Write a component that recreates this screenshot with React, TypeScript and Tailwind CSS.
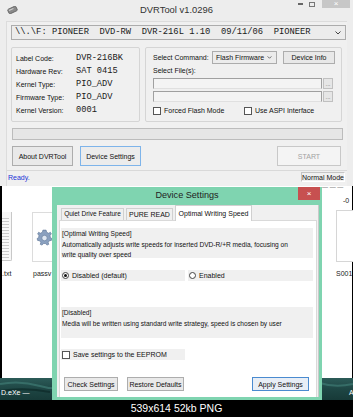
import React from "react";

const sans = { fontFamily: '"Liberation Sans", Arial, sans-serif' };
const mono = { fontFamily: '"Liberation Mono", "Courier New", monospace' };

function Btn({ children, className = "" }: { children: React.ReactNode; className?: string }) {
  return (
    <div
      className={
        "flex items-center justify-center border text-[7px] leading-none text-[#111] whitespace-nowrap " + className
      }
    >
      {children}
    </div>
  );
}

function Check({ label }: { label: string }) {
  return (
    <div className="flex items-center gap-[3px]">
      <div className="w-[8px] h-[8px] bg-white border border-[#555]" />
      <span className="text-[7px] leading-none text-[#111] whitespace-nowrap">{label}</span>
    </div>
  );
}

function Radio({ label, on }: { label: string; on?: boolean }) {
  return (
    <div className="flex items-center gap-[3px]">
      <div className="w-[7px] h-[7px] rounded-full bg-white border border-[#444] flex items-center justify-center">
        {on && <div className="w-[3px] h-[3px] rounded-full bg-[#111]" />}
      </div>
      <span className="text-[7px] leading-none text-[#111] whitespace-nowrap">{label}</span>
    </div>
  );
}

function MainWindow() {
  const info: [string, string][] = [
    ["Label Code:", "DVR-216BK"],
    ["Hardware Rev:", "SAT 0415"],
    ["Kernel Type:", "PIO_ADV"],
    ["Firmware Type:", "PIO_ADV"],
    ["Kernel Version:", "0001"],
  ];
  return (
    <div className="absolute left-0 top-0 w-[353px] h-[186px] bg-[#ededed] flex flex-col" style={sans}>
      {/* title bar */}
      <div className="relative h-[21px] flex items-center justify-center">
        <svg className="absolute left-[7px] top-[6px]" width="11" height="8" viewBox="0 0 11 8">
          <g transform="rotate(-25 5.5 4)">
            <rect x="1" y="1.5" width="9" height="5" rx="1.2" fill="#8a8a8a" stroke="#555" strokeWidth="0.7" />
            <rect x="2" y="2.5" width="5" height="1" fill="#d0d0d0" />
          </g>
        </svg>
        <span className="text-[9.4px] text-[#333] leading-none mb-[1px]">DVRTool v1.0296</span>
        <div className="absolute right-[3px] top-0 flex items-start">
          <div className="w-[10px] h-[8px] flex items-center justify-center">
            <div className="w-[5px] h-[1.5px] bg-[#666]" />
          </div>
          <div className="w-[10px] h-[8px] flex items-center justify-center ml-[2px]">
            <div className="w-[6px] h-[5px] border border-[#777]" />
          </div>
          <div className="ml-[5px] w-[28px] h-[8px] bg-[#c7c7c7] flex items-center justify-center text-white text-[8px] leading-none">
            ×
          </div>
        </div>
      </div>
      {/* client */}
      <div className="ml-[6px] w-[341px] flex-1 bg-[#f0f0f0] border-l border-t border-[#dcdcdc] flex flex-col">
        {/* drive combo */}
        <div className="mt-[3px] ml-[4px] w-[335px] h-[15px] bg-[#ececec] border border-[#acacac] flex items-center">
          <span className="ml-[3px] text-[8.8px] leading-none text-[#1a1a1a] whitespace-pre" style={mono}>
            {"\\\\.\\F: PIONEER  DVD-RW  DVR-216L 1.10  09/11/06  PIONEER"}
          </span>
          <svg className="ml-auto mr-[4px]" width="6" height="4" viewBox="0 0 6 4">
            <path d="M0.5 0.5 L3 3 L5.5 0.5" stroke="#444" strokeWidth="1" fill="none" />
          </svg>
        </div>
        {/* groups */}
        <div className="mt-[7px] ml-[4px] flex gap-[5px] h-[75px]">
          <div className="w-[129px] border border-[#d5d5d5] rounded-[2px] pt-[4px] pl-[4px] flex flex-col">
            {info.map(([k, v]) => (
              <div key={k} className="h-[13px] flex items-center">
                <span className="w-[60px] text-[7px] leading-none text-[#111]">{k}</span>
                <span className="text-[8.7px] leading-none text-[#1a1a1a]" style={mono}>
                  {v}
                </span>
              </div>
            ))}
          </div>
          <div className="w-[197px] border border-[#d5d5d5] rounded-[2px] pt-[3px] pl-[7px] flex flex-col">
            <div className="h-[13px] flex items-center">
              <span className="w-[59px] text-[7px] leading-none text-[#111]">Select Command:</span>
              <div className="w-[65px] h-[13px] bg-[#ececec] border border-[#acacac] flex items-center">
                <span className="ml-[3px] text-[7px] leading-none text-[#111]">Flash Firmware</span>
                <svg className="ml-auto mr-[4px]" width="5" height="3" viewBox="0 0 6 4">
                  <path d="M0.5 0.5 L3 3 L5.5 0.5" stroke="#444" strokeWidth="1" fill="none" />
                </svg>
              </div>
              <Btn className="ml-[6px] w-[52px] h-[13px] bg-[#e8e8e8] border-[#adadad]">Device Info</Btn>
            </div>
            <div className="h-[13px] flex items-center">
              <span className="text-[7px] leading-none text-[#111]">Select File(s):</span>
            </div>
            <div className="mt-[1px] flex items-center gap-[1px]">
              <div className="w-[169px] h-[11px] bg-[#f4f4f4] border border-[#a0a0a0] border-b-[#e0e0e0]" />
              <div className="w-[10px] h-[11px] bg-[#e6e6e6] border border-[#c0c0c0] text-[6px] leading-none text-[#666] flex items-end justify-center pb-[1px]">
                ...
              </div>
            </div>
            <div className="mt-[2px] flex items-center gap-[1px]">
              <div className="w-[169px] h-[11px] bg-[#f4f4f4] border border-[#a0a0a0] border-b-[#e0e0e0]" />
              <div className="w-[10px] h-[11px] bg-[#e6e6e6] border border-[#c0c0c0] text-[6px] leading-none text-[#666] flex items-end justify-center pb-[1px]">
                ...
              </div>
            </div>
            <div className="mt-[3px] h-[11px] flex items-center">
              <div className="w-[91px]">
                <Check label="Forced Flash Mode" />
              </div>
              <Check label="Use ASPI Interface" />
            </div>
          </div>
        </div>
        {/* progress */}
        <div className="mt-[6px] ml-[5px] w-[331px] h-[12px] bg-[#e6e6e6] border border-[#bcbcbc]" />
        {/* buttons */}
        <div className="mt-[6px] flex h-[20px]">
          <Btn className="ml-[5px] w-[61px] h-[20px] bg-[#e9e9e9] border-[#adadad]">About DVRTool</Btn>
          <Btn className="ml-[7px] w-[61px] h-[20px] bg-[#ececec] border-[#7eb4ea]">Device Settings</Btn>
          <Btn className="ml-auto mr-[6px] w-[64px] h-[20px] bg-[#f4f4f4] border-[#c8c8c8] !text-[#a2a2a2]">
            START
          </Btn>
        </div>
        {/* status bar */}
        <div className="mt-[4px] h-[13px] border-t border-[#d9d9d9] flex items-center">
          <span className="ml-[1px] text-[7px] leading-none text-[#2233d6]">Ready.</span>
          <div className="ml-auto mr-[2px] w-[44px] h-[10px] border border-[#c5c5c5] border-r-white border-b-white flex items-center justify-center">
            <span className="text-[7px] leading-none text-[#111] whitespace-nowrap">Normal Mode</span>
          </div>
        </div>
      </div>
    </div>
  );
}

function Dialog() {
  return (
    <div className="absolute left-[52px] top-[187px] w-[270px] h-[213px] bg-[#7fd4b0] flex flex-col" style={sans}>
      <div className="relative h-[18px] flex items-center justify-center">
        <span className="text-[9.1px] leading-none text-[#222]">Device Settings</span>
        <div className="absolute right-[2px] top-0 w-[22px] h-[13px] bg-[#c75050] flex items-center justify-center text-white text-[8px] leading-none">
          ×
        </div>
      </div>
      <div className="ml-[5px] w-[262px] h-[192px] bg-[#f0f0f0] border-r border-[#c9c9c9] flex flex-col">
        {/* tab strip */}
        <div className="h-[15px] flex items-end pl-[4px]">
          <div className="w-[63px] h-[12px] bg-[#f0f0f0] border border-b-0 border-[#d0d0d0] flex items-center justify-center text-[6.5px] leading-none text-[#111] whitespace-nowrap">
            Quiet Drive Feature
          </div>
          <div className="ml-[2px] w-[47px] h-[12px] bg-[#f0f0f0] border border-b-0 border-[#d0d0d0] flex items-center justify-center text-[7px] leading-none text-[#111] whitespace-nowrap">
            PURE READ
          </div>
          <div className="ml-[2px] w-[77px] h-[16px] -mb-[1px] relative z-10 bg-white border border-b-0 border-[#d0d0d0] flex items-center justify-center text-[7px] leading-none text-[#111] whitespace-nowrap">
            Optimal Writing Speed
          </div>
        </div>
        {/* panel */}
        <div className="ml-[2px] w-[258px] flex-1 bg-white border border-[#d9d9d9] border-b-0 flex flex-col pl-[1px]">
          <div className="mt-[7px] w-[252px] h-[30px] bg-[#f0f0f0] pl-[1px] pt-[1px] text-[6.6px] leading-[10.5px] text-[#111] whitespace-nowrap">
            <div>[Optimal Writing Speed]</div>
            <div>Automatically adjusts write speeds for inserted DVD-R/+R media, focusing on</div>
            <div>write quality over speed</div>
          </div>
          <div className="mt-[12px] flex gap-[3px] h-[11px]">
            <div className="w-[124px] h-[11px] bg-[#f0f0f0] pl-[1px] flex items-center">
              <Radio label="Disabled (default)" on />
            </div>
            <div className="w-[125px] h-[11px] bg-[#f0f0f0] pl-[1px] flex items-center">
              <Radio label="Enabled" />
            </div>
          </div>
          <div className="mt-[26px] w-[252px] h-[31px] bg-[#f0f0f0] pl-[1px] text-[6.6px] leading-[11px] text-[#111] whitespace-nowrap">
            <div>[Disabled]</div>
            <div>Media will be written using standard write strategy, speed is chosen by user</div>
          </div>
          <div className="mt-[11px] w-[124px] h-[11px] bg-[#f0f0f0] pl-[1px] flex items-center">
            <Check label="Save settings to the EEPROM" />
          </div>
          <div className="mt-[17px] flex h-[14px]">
            <Btn className="ml-[3px] w-[54px] h-[14px] bg-[#e9e9e9] border-[#adadad]">Check Settings</Btn>
            <Btn className="ml-[9px] w-[57px] h-[14px] bg-[#e9e9e9] border-[#adadad]">Restore Defaults</Btn>
            <Btn className="ml-auto mr-[7px] w-[57px] h-[14px] bg-[#e8eef6] border-[#4a8bd0]">Apply Settings</Btn>
          </div>
        </div>
      </div>
    </div>
  );
}

function Desktop() {
  return (
    <div className="relative w-[353px] h-[400px] bg-white overflow-hidden" style={sans}>
      {/* side strips */}
      <div className="absolute left-0 top-[186px] w-[2px] h-[192px] bg-black" />
      <div className="absolute right-0 top-[186px] w-[1px] h-[192px] bg-black" />
      {/* bottom teal wallpaper strip */}
      <div className="absolute left-0 top-[378px] w-[353px] h-[22px] bg-gradient-to-b from-[#2c5b58] via-[#1e4644] to-[#173a38]">
        <svg className="absolute inset-0" width="353" height="22" viewBox="0 0 353 22">
          <path d="M0 6 Q20 2 40 8 T80 6" stroke="#3f7a74" strokeWidth="2" fill="none" opacity="0.7" />
          <path d="M0 13 Q25 9 50 14" stroke="#0f2c2a" strokeWidth="2" fill="none" opacity="0.8" />
          <path d="M320 5 Q335 10 353 6" stroke="#3f7a74" strokeWidth="2" fill="none" opacity="0.7" />
        </svg>
        <span className="absolute left-[1px] top-[11px] text-[7px] leading-none text-white whitespace-nowrap">D.eXe —</span>
        <span className="absolute left-[349px] top-[11px] text-[7px] leading-none text-white">A</span>
      </div>
      {/* txt file icon */}
      <div className="absolute left-[2px] top-[212px] w-[10px] h-[49px] bg-[#f7f7f7] border-r border-b border-[#c8c8c8] rounded-br-[2px] flex flex-col gap-[2px] pt-[6px] pr-[2px]">
        {Array.from({ length: 14 }).map((_, i) => (
          <div key={i} className="h-[1px] bg-[#c9c9c9]" />
        ))}
      </div>
      <span className="absolute left-[2px] top-[270px] text-[7px] leading-none text-[#222]">.txt</span>
      {/* gear icon */}
      <div className="absolute left-[32px] top-[212px] w-[24px] h-[50px] bg-white border border-[#dcdcdc] flex items-center">
        <svg className="ml-[3px]" width="17" height="19" viewBox="0 0 16 18">
          <g fill="#8aa0bf" stroke="#5d7597" strokeWidth="0.6">
            <path d="M8 2 L9.5 2 L10 4 L12 5 L13.5 4 L14.5 5.5 L13.3 7 L13.5 9 L15 10 L14.5 11.8 L12.7 12 L11.5 13.6 L12 15.5 L10.3 16.2 L9 14.7 L7 14.7 L5.7 16.2 L4 15.5 L4.5 13.6 L3.3 12 L1.5 11.8 L1 10 L2.5 9 L2.7 7 L1.5 5.5 L2.5 4 L4 5 L6 4 L6.5 2 Z" />
          </g>
          <circle cx="8" cy="9.5" r="2.6" fill="#dfe7f2" stroke="#5d7597" strokeWidth="0.6" />
        </svg>
      </div>
      <span className="absolute left-[33px] top-[270px] text-[7px] leading-none text-[#222]">passv</span>
      {/* right side */}
      <span className="absolute left-[322px] top-[184px] text-[6px] leading-none text-[#444] whitespace-nowrap">— — —</span>
      <span className="absolute left-[343px] top-[197px] text-[7px] leading-none text-[#222]">-0</span>
      <div className="absolute left-[336px] top-[210px] w-[20px] h-[52px] bg-white border border-[#d6d6d6]" />
      <span className="absolute left-[336px] top-[270px] text-[7px] leading-none text-[#222]">S001</span>
      <MainWindow />
      <Dialog />
    </div>
  );
}

export default function App() {
  return (
    <div className="w-[353px] h-[417px] bg-black flex flex-col">
      <Desktop />
      <div className="h-[17px] flex items-center justify-center" style={sans}>
        <span className="text-[10.5px] leading-none text-white">539x614 52kb PNG</span>
      </div>
    </div>
  );
}
